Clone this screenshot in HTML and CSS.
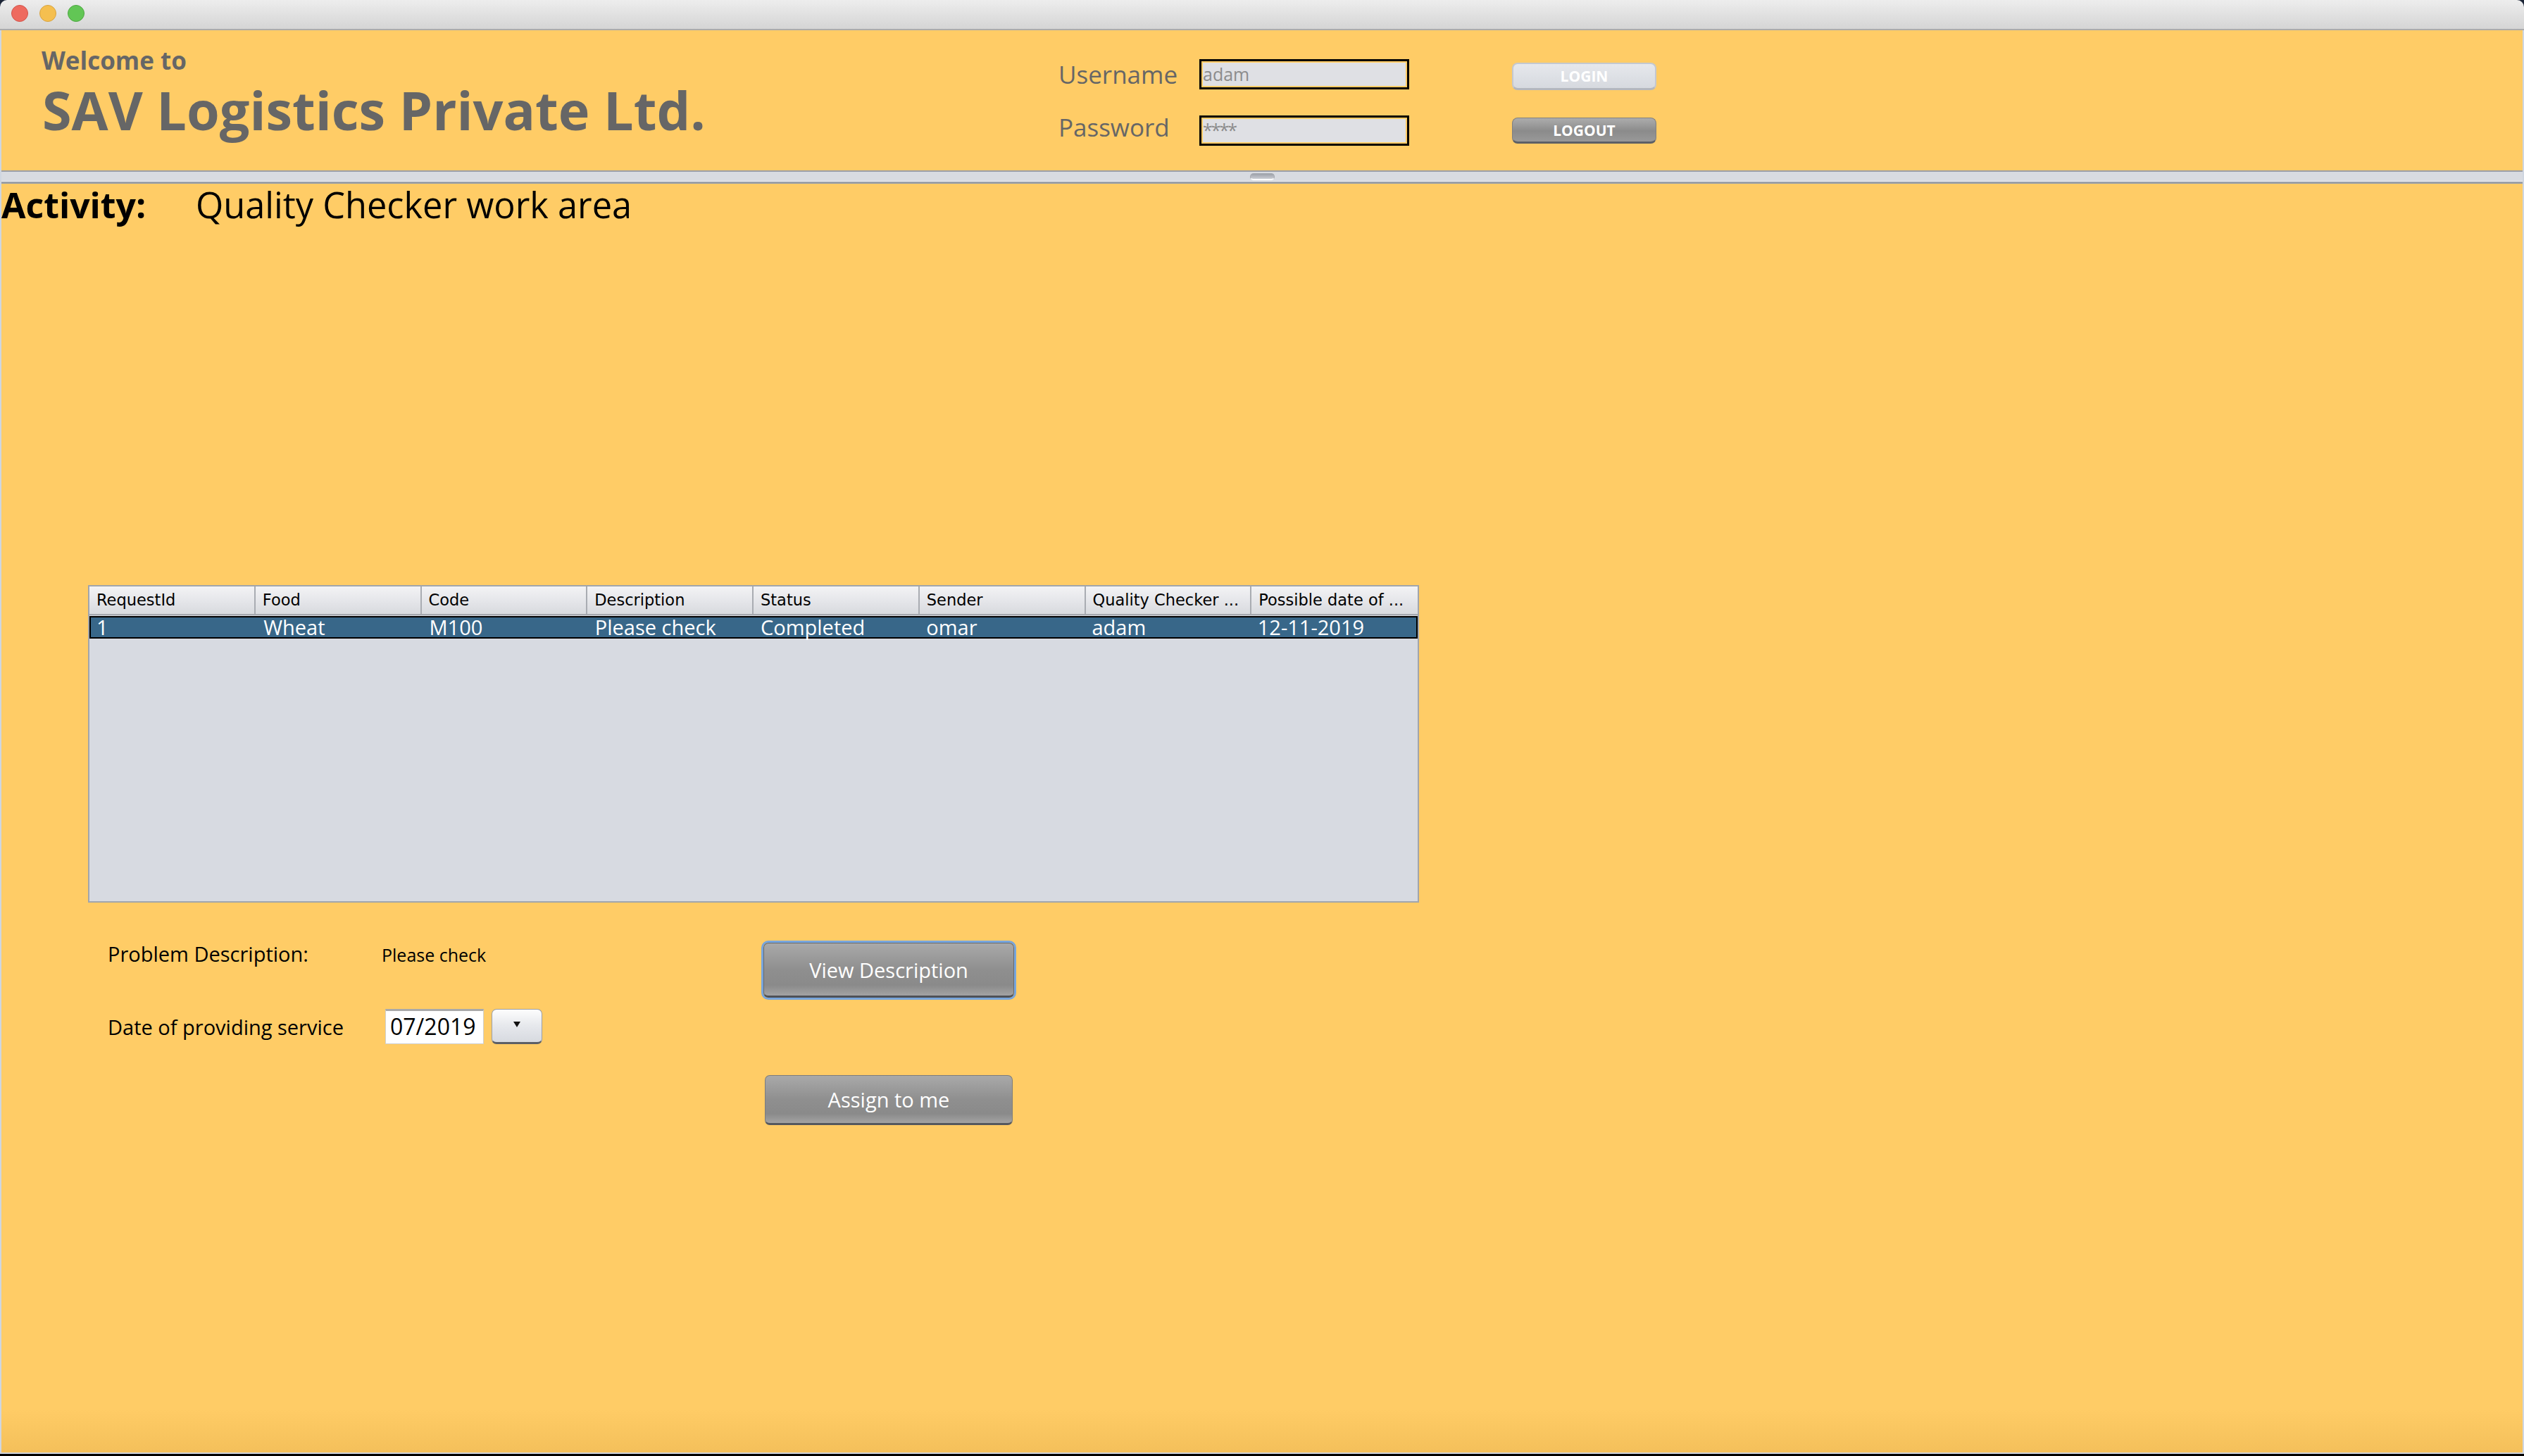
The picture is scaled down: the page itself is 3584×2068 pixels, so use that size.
FILE: index.html
```html
<!DOCTYPE html>
<html lang="en">
<head>
<meta charset="utf-8">
<title>SAV Logistics</title>
<link rel="stylesheet" href="styles.css">
</head>
<body>
<div class="window">
  <div class="titlebar">
    <span class="light red"></span>
    <span class="light yellow"></span>
    <span class="light green"></span>
  </div>
  <div class="content">
    <header class="header">
      <div class="brand">
        <div class="welcome">Welcome to</div>
        <div class="company">SAV Logistics Private Ltd.</div>
      </div>
      <div class="login">
        <div class="login-label">Username</div>
        <div class="field">adam</div>
        <div></div>
        <button class="btn-small btn-light">LOGIN</button>
        <div class="login-label pw">Password</div>
        <div class="field pwfield">****</div>
        <div></div>
        <button class="btn-small btn-dark">LOGOUT</button>
      </div>
    </header>
    <div class="splitter"><span class="grip"></span></div>
    <main class="work">
      <div class="activity"><span class="act-label">Activity:</span><span class="act-value">Quality Checker work area</span></div>
      <div class="table">
        <div class="thead">
          <div class="th">RequestId</div>
          <div class="th">Food</div>
          <div class="th">Code</div>
          <div class="th">Description</div>
          <div class="th">Status</div>
          <div class="th">Sender</div>
          <div class="th">Quality Checker ...</div>
          <div class="th last">Possible date of ...</div>
        </div>
        <div class="tr selected">
          <div class="td">1</div>
          <div class="td">Wheat</div>
          <div class="td">M100</div>
          <div class="td">Please check</div>
          <div class="td">Completed</div>
          <div class="td">omar</div>
          <div class="td">adam</div>
          <div class="td">12-11-2019</div>
        </div>
      </div>
      <div class="form">
        <div class="form-row row1">
          <div class="form-label">Problem Description:</div>
          <div class="form-value">Please check</div>
          <button class="btn-big focused">View Description</button>
        </div>
        <div class="form-row row2">
          <div class="form-label">Date of providing service</div>
          <div class="date-group">
            <div class="date-field">07/2019</div>
            <button class="drop"><span class="tri"></span></button>
          </div>
        </div>
        <div class="form-row row3">
          <button class="btn-big assign">Assign to me</button>
        </div>
      </div>
    </main>
    <div class="bottom-edge"></div>
  </div>
</div>
</body>
</html>
```

FILE: styles.css
```css
* { box-sizing: border-box; }
html, body { margin: 0; padding: 0; }
body {
  width: 3584px;
  height: 2068px;
  overflow: hidden;
  background: #1b2436;
  font-family: "Open Sans", "DejaVu Sans", sans-serif;
}
.window {
  width: 3584px;
  height: 2068px;
  display: flex;
  flex-direction: column;
}
.titlebar {
  height: 43px;
  flex: 0 0 43px;
  background: linear-gradient(#ededed, #d5d5d5);
  border-bottom: 2px solid #ababab;
  border-radius: 10px 10px 0 0;
  display: flex;
  align-items: center;
  gap: 16px;
  padding: 0 0 4px 16px;
}
.light {
  width: 24px;
  height: 24px;
  border-radius: 50%;
  display: block;
}
.red { background: #ee6a5f; border: 1px solid #d2554b; }
.yellow { background: #f5bf4f; border: 1px solid #d8a340; }
.green { background: #62c655; border: 1px solid #4ea842; }

.content {
  flex: 1;
  display: flex;
  flex-direction: column;
  background: #ffcc66;
  border-left: 2px solid #cfd6e1;
  border-right: 2px solid #cfd6e1;
}
.header {
  height: 199px;
  flex: 0 0 199px;
  display: flex;
}
.brand {
  flex: 0 0 1501px;
  padding: 23px 0 0 57px;
  color: #666666;
}
.welcome {
  font-size: 35px;
  font-weight: 700;
  line-height: 40px;
}
.company {
  margin-top: 10px;
  margin-left: 1px;
  font-size: 75.5px;
  font-weight: 700;
  line-height: 80px;
}
.login {
  padding-top: 41px;
  display: grid;
  grid-template-columns: 200px 298px 146px 205px;
  grid-template-rows: 43px 43px;
  row-gap: 37px;
}
.login-label {
  font-size: 35px;
  line-height: 43px;
  color: #666666;
}
.login-label.pw { margin-top: -5px; }
.field {
  border: 3px solid #000;
  box-shadow: inset 0 0 0 2px #ffcc66;
  background: #dfe0e4;
  font-size: 25px;
  color: #8c8c8c;
  line-height: 37px;
  padding-left: 2px;
}
.pwfield {
  letter-spacing: -2px;
  line-height: 34px;
}
.btn-small {
  font-family: "Open Sans", "DejaVu Sans", sans-serif;
  font-size: 21px;
  font-weight: 700;
  color: #ffffff;
  border-radius: 8px;
  padding: 0;
  align-self: start;
}
.btn-light {
  margin-top: 5px;
  height: 39px;
  background: linear-gradient(#e6e8ec, #d6d9df);
  border: 2px solid #c4c8cf;
  border-bottom: 3px solid #b3b7bf;
}
.btn-dark {
  margin-top: 3px;
  height: 37px;
  background: linear-gradient(#acacac, #8b8b8b 55%, #999999);
  border: 1px solid #808080;
  border-bottom: 3px solid #5d6066;
}

.splitter {
  height: 19px;
  flex: 0 0 19px;
  background: #d8dbe1;
  border-top: 2px solid #9b9fa7;
  border-bottom: 3px solid #9b9fa7;
  box-shadow: inset 0 -1px 0 #f0f1f4;
  display: flex;
  justify-content: center;
  align-items: center;
}
.grip {
  display: block;
  width: 35px;
  height: 10px;
  border-radius: 5px;
  background: linear-gradient(#9ea2aa, #c9ccd3);
  border: 1px solid #a3a7ae;
  border-bottom: 2px solid #ffffff;
}

.work {
  flex: 1;
  position: relative;
}
.work::after {
  content: "";
  position: absolute;
  left: 0;
  right: 0;
  bottom: 0;
  height: 62px;
  background: linear-gradient(rgba(230,170,60,0), rgba(215,160,60,0.28));
  pointer-events: none;
}
.activity {
  height: 60px;
  line-height: 60px;
  font-size: 50px;
  color: #000;
  white-space: nowrap;
}
.act-label {
  display: inline-block;
  width: 276px;
  font-weight: 700;
}
.act-value {
  font-size: 50.5px;
}
.table {
  margin: 510px 0 0 123px;
  width: 1890px;
  height: 451px;
  border: 2px solid #a1a5ac;
  background: #d7dae1;
}
.thead {
  display: grid;
  grid-template-columns: repeat(8, 1fr);
  height: 41px;
  background: linear-gradient(#f3f3f5, #e3e4e8 60%, #d8dade);
  border-bottom: 2px solid #a4a7ad;
}
.th {
  font-family: "DejaVu Sans", sans-serif;
  font-size: 22.5px;
  line-height: 39px;
  color: #000;
  padding-left: 10px;
  border-right: 2px solid #a9acb2;
  white-space: nowrap;
  overflow: hidden;
}
.th.last { border-right: none; }
.tr {
  display: grid;
  grid-template-columns: repeat(8, 1fr);
  margin-top: 1px;
}
.selected {
  background: #386789;
  border: 2px solid #000;
  height: 32px;
}
.td {
  font-size: 29px;
  line-height: 28px;
  color: #fff;
  padding-left: 8px;
  white-space: nowrap;
}
.td:not(:first-child) { padding-left: 10px; }

.form {
  margin-top: 57px;
  padding-left: 151px;
}
.form-row {
  display: flex;
}
.row1 { height: 78px; }
.row2 { height: 50px; margin-top: 16px; align-items: center; }
.row3 { height: 71px; margin-top: 44px; padding-left: 933px; }
.form-label {
  flex: 0 0 389px;
  font-size: 29px;
  line-height: 29px;
  color: #000;
}
.row1 .form-label { margin-top: 1px; }
.form-value {
  flex: 0 0 542px;
  margin-top: 5px;
  font-size: 25px;
  line-height: 25px;
  color: #000;
}
.date-group {
  display: flex;
  gap: 11px;
  margin-left: 5px;
  height: 50px;
}
.date-field {
  width: 140px;
  height: 50px;
  background: #fff;
  border: 1px solid #cfcfcf;
  border-top: 3px solid #a9a9a9;
  font-size: 32px;
  line-height: 44px;
  padding-left: 6px;
  color: #000;
}
.drop {
  width: 72px;
  height: 50px;
  padding: 0;
  border-radius: 7px;
  background: linear-gradient(#fdfdfd, #e6e8ec 50%, #d7dae0);
  border: 1px solid #9a9ea6;
  border-bottom: 3px solid #5b5f66;
  display: flex;
  align-items: center;
  justify-content: center;
}
.tri {
  display: block;
  width: 0;
  height: 0;
  border-left: 5px solid transparent;
  border-right: 5px solid transparent;
  border-top: 8px solid #111;
  margin-top: -4px;
}
.btn-big {
  font-family: "Open Sans", "DejaVu Sans", sans-serif;
  font-size: 29px;
  color: #ffffff;
  background: linear-gradient(#a9a9a9, #8f8f8f 50%, #8a8a8a 80%, #a3a3a3);
  border: 1px solid #7c7c7c;
  border-bottom: 3px solid #55585e;
  border-radius: 7px;
  padding: 0;
}
.focused {
  width: 356px;
  height: 78px;
  box-shadow: 0 0 0 3px #77a5dc;
  border: 1px solid #6a6a6a;
  border-bottom: 3px solid #4e5157;
}
.assign {
  width: 352px;
  height: 71px;
}
.bottom-edge {
  height: 5px;
  flex: 0 0 5px;
  background: #000;
  border-top: 2px solid #d0d5de;
  margin: 0 -2px;
}
```
